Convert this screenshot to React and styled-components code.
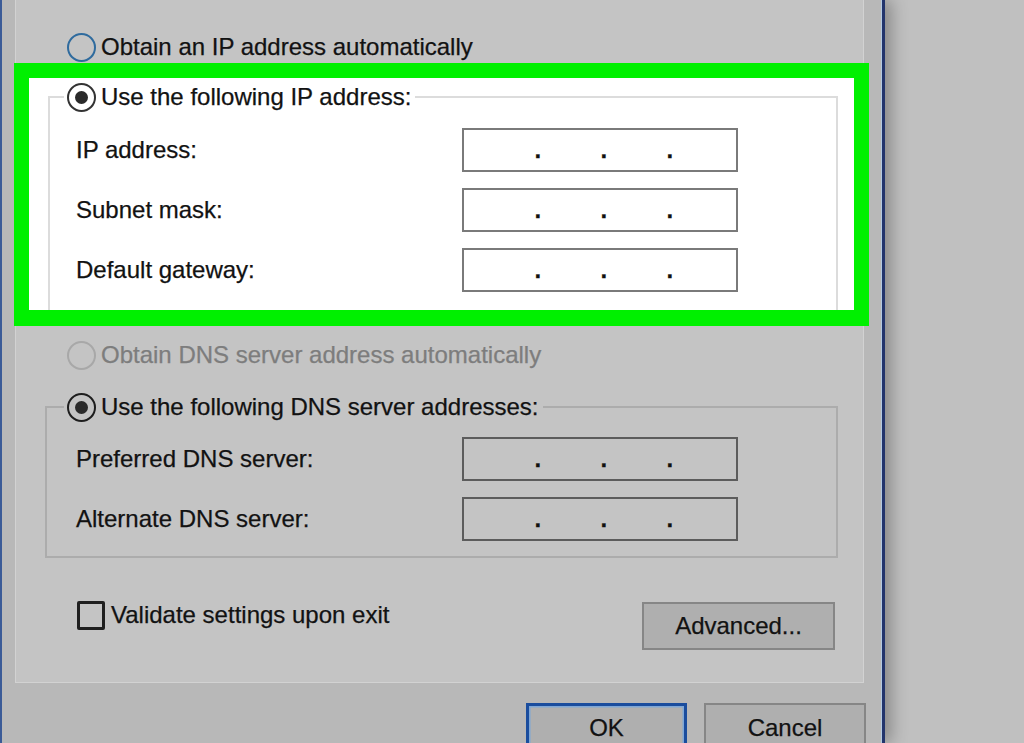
import React from 'react';
import styled, { createGlobalStyle } from 'styled-components';

const GlobalStyle = createGlobalStyle`
  html, body {
    margin: 0;
    padding: 0;
    background: #c0c0c0;
  }
  body {
    font-family: "Liberation Sans", Arial, sans-serif;
    color: #121212;
    -webkit-text-stroke: 0.25px currentColor;
  }
`;

const Page = styled.div`
  display: flex;
  width: 1024px;
  height: 743px;
  overflow: hidden;
  background: #c0c0c0;
`;

const Window = styled.div`
  flex: 0 0 885px;
  box-sizing: border-box;
  height: 100%;
  display: flex;
  flex-direction: column;
  background: #b8b8b8;
  border-left: 2px solid #3b5b97;
  border-right: 3px solid #22346c;
  box-shadow: inset -1px 0 0 #b3c9e2, 6px 0 16px rgba(0, 0, 0, 0.3);
  padding: 0 18px 0 13px;
  position: relative;
  z-index: 1;
`;

const TabPage = styled.div`
  box-sizing: border-box;
  width: 849px;
  flex: none;
  background: #c4c4c4;
  border: 1px solid #d2d2d2;
  border-top: none;
  padding: 32px 0 32px;
  display: flex;
  flex-direction: column;
`;

const OptionRow = styled.label`
  display: flex;
  align-items: center;
  gap: 5px;
  height: 30px;
  margin-left: ${p => p.$indent}px;
  margin-top: ${p => p.$top || 0}px;
  font-size: 24px;
  color: ${p => (p.$disabled ? '#7d7d7d' : '#121212')};
  white-space: nowrap;
`;

const Radio = styled.span`
  box-sizing: border-box;
  flex: none;
  width: 29px;
  height: 29px;
  border-radius: 50%;
  border: 2.5px solid ${p => p.$ring};
  background: ${p => p.$fill};
  display: flex;
  align-items: center;
  justify-content: center;

  &::after {
    content: '';
    display: ${p => (p.$checked ? 'block' : 'none')};
    width: 13px;
    height: 13px;
    border-radius: 50%;
    background: #2a2a2a;
  }
`;

const Highlight = styled.section`
  margin: 1px -6px 0 -2px;
  border: 15px solid #00f000;
  border-bottom-width: 16px;
  background: #ffffff;
  padding: 4px 16px 0 19px;
`;

const GroupBox = styled.fieldset`
  margin: ${p => p.$margin};
  min-width: 0;
  border: 2px solid ${p => p.$line};
  ${p => p.$open && 'border-bottom: none;'}
  padding: ${p => p.$padTop}px 0 ${p => p.$padBottom}px ${p => p.$padLeft}px;
`;

const Legend = styled.legend`
  margin-left: -12px;
  padding: 0 4px 0 3px;
  display: flex;
  align-items: center;
  gap: 5px;
  height: 30px;
  font-size: 24px;
  white-space: nowrap;
`;

const FieldGrid = styled.div`
  display: grid;
  grid-template-columns: 386px 276px;
  grid-auto-rows: 44px;
  row-gap: 16px;
  align-items: center;
`;

const FieldLabel = styled.span`
  font-size: 24px;
  white-space: nowrap;
`;

const IpBox = styled.div`
  box-sizing: border-box;
  width: 276px;
  height: 44px;
  border: 2px solid ${p => (p.$dim ? '#5c5c5c' : '#7a7a7a')};
  background: ${p => (p.$dim ? '#c4c4c4' : '#ffffff')};
  display: flex;
  justify-content: center;
  align-items: flex-start;
  padding: 8px 0 0 5px;
`;

const Octet = styled.span`
  width: 62px;
`;

const Dot = styled.span`
  width: 4px;
  font-size: 24px;
  line-height: 24px;
  font-weight: bold;
  text-align: center;
  color: #111;
`;

const BottomRow = styled.div`
  display: flex;
  justify-content: space-between;
  align-items: flex-start;
  margin: 42px 28px 0 61px;
`;

const CheckRow = styled.label`
  display: flex;
  align-items: center;
  gap: 6px;
  height: 30px;
  font-size: 24px;
  white-space: nowrap;
`;

const CheckBox = styled.span`
  box-sizing: border-box;
  width: 28px;
  height: 29px;
  border: 3px solid #1f1f1f;
  border-radius: 2px;
  background: #c4c4c4;
`;

const Button = styled.button`
  box-sizing: border-box;
  width: ${p => p.$w}px;
  height: ${p => p.$h}px;
  margin-top: ${p => p.$top || 0}px;
  background: #afafaf;
  border: ${p => (p.$primary ? '3px solid #1a4d9e' : '2px solid #868686')};
  box-shadow: ${p => (p.$primary ? 'inset 0 0 0 1.5px #7fa7d6' : 'none')};
  font-family: "Liberation Sans", Arial, sans-serif;
  font-size: 24px;
  color: #121212;
  -webkit-text-stroke: 0.25px currentColor;
  padding: 0;
  display: flex;
  align-items: center;
  justify-content: center;
  flex: none;
`;

const ButtonBar = styled.div`
  display: flex;
  justify-content: flex-end;
  align-items: flex-start;
  gap: 17px;
  margin: 20px -2px 0 0;
`;

function IpField({ dim }) {
  return (
    <IpBox $dim={dim}>
      <Octet />
      <Dot>.</Dot>
      <Octet />
      <Dot>.</Dot>
      <Octet />
      <Dot>.</Dot>
      <Octet />
    </IpBox>
  );
}

function AddressFields({ rows, dim }) {
  return (
    <FieldGrid>
      {rows.map(label => (
        <React.Fragment key={label}>
          <FieldLabel>{label}</FieldLabel>
          <IpField dim={dim} />
        </React.Fragment>
      ))}
    </FieldGrid>
  );
}

export default function App() {
  return (
    <>
      <GlobalStyle />
      <Page>
        <Window>
          <TabPage>
            <OptionRow $indent={51}>
              <Radio $ring="#2f6b9e" $fill="#c4c4c4" />
              Obtain an IP address automatically
            </OptionRow>

            <Highlight>
              <GroupBox
                $margin="0"
                $line="#dcdcdc"
                $open
                $padTop={16}
                $padBottom={18}
                $padLeft={26}
              >
                <Legend>
                  <Radio $ring="#333333" $fill="#ffffff" $checked />
                  Use the following IP address:
                </Legend>
                <AddressFields rows={['IP address:', 'Subnet mask:', 'Default gateway:']} />
              </GroupBox>
            </Highlight>

            <OptionRow $indent={51} $top={14} $disabled>
              <Radio $ring="#a8a8a8" $fill="#c4c4c4" />
              Obtain DNS server address automatically
            </OptionRow>

            <GroupBox
              $margin="22px 25px 0 29px"
              $line="#acacac"
              $padTop={15}
              $padBottom={15}
              $padLeft={29}
            >
              <Legend>
                <Radio $ring="#1e1e1e" $fill="#c4c4c4" $checked />
                Use the following DNS server addresses:
              </Legend>
              <AddressFields dim rows={['Preferred DNS server:', 'Alternate DNS server:']} />
            </GroupBox>

            <BottomRow>
              <CheckRow>
                <CheckBox />
                Validate settings upon exit
              </CheckRow>
              <Button $w={193} $h={48} $top={2}>Advanced...</Button>
            </BottomRow>
          </TabPage>

          <ButtonBar>
            <Button $primary $w={161} $h={50}>OK</Button>
            <Button $w={162} $h={50}>Cancel</Button>
          </ButtonBar>
        </Window>
      </Page>
    </>
  );
}
